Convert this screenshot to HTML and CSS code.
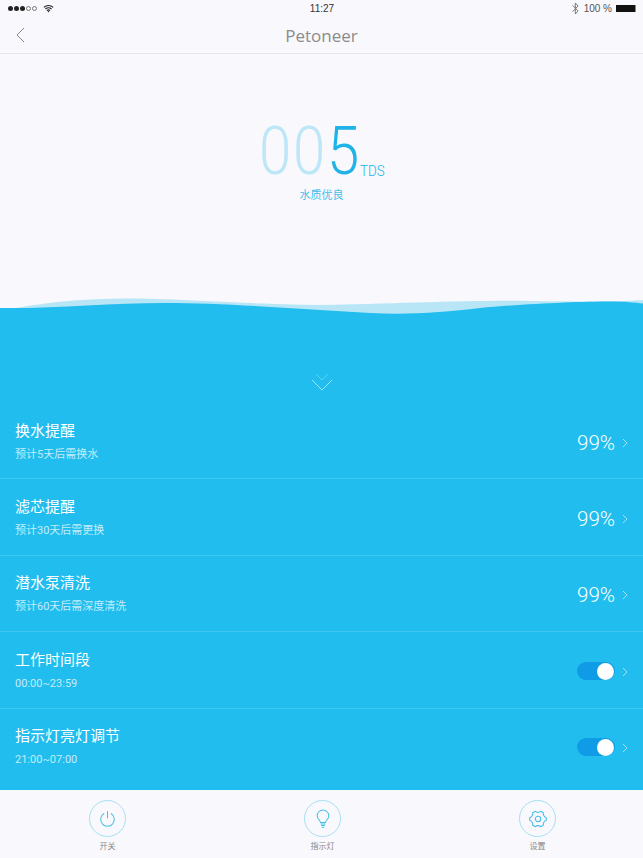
FILE: index.html
```html
<!DOCTYPE html>
<html lang="zh-CN">
<head>
    <meta charset="UTF-8">
    <meta name="viewport" content="width=device-width, initial-scale=1.0">
    <title>Petoneer</title>
    <link rel="stylesheet" href="styles.css">
</head>
<body>
    <div class="status-bar">
        <div class="status-left">
            <span class="signal">
                <i class="dot"></i><i class="dot"></i><i class="dot"></i><i class="dot off"></i><i class="dot off"></i>
            </span>
            <svg class="wifi" width="11" height="9" viewBox="0 0 13 10">
                <path d="M1 3.600a8 8 0 0 1 11 0M2.900 5.600a5.200 5.200 0 0 1 7.200 0M4.700 7.400a2.600 2.600 0 0 1 3.600 0" fill="none" stroke="#222" stroke-width="1.300"/>
                <path d="M5.400 8.500a1.500 1.500 0 0 1 2.200 0L6.500 9.800z" fill="#222"/>
            </svg>
        </div>
        <div class="status-time">11:27</div>
        <div class="status-right">
            <svg class="bluetooth" width="7" height="13" viewBox="0 0 7 13">
                <path d="M.7 3.400l5.400 5.600-2.800 3V1l2.800 3L.7 9.600" fill="none" stroke="#777" stroke-width="1"/>
            </svg>
            <span class="battery-text">100 %</span>
            <span class="battery"></span>
        </div>
    </div>

    <header class="nav">
        <svg class="back" width="9" height="16" viewBox="0 0 9 16">
            <path d="M8 1L1 8l7 7" fill="none" stroke="#8a8a8a" stroke-width="1"/>
        </svg>
        <h1>Petoneer</h1>
    </header>

    <section class="hero">
        <div class="reading">
            <span class="digit dim">0</span>
            <span class="digit dim">0</span>
            <span class="digit">5</span>
            <span class="unit">TDS</span>
        </div>
        <p class="quality">水质优良</p>
    </section>

    <svg class="wave" width="643" height="24" viewBox="0 0 643 24">
        <path d="M16 10C50 4 85 .5 125 .5C185 .5 240 6 320 7C390 6 470 2 530 3C570 3.500 610 4 643 2V24H16z" fill="#b9e6f7"/>
        <path d="M0 10C50 11 110 5 165 5C225 5 300 11 370 15C410 17 445 14 480 10C520 6 580 3.500 610 3.500C625 3.500 635 4.500 643 5.500V24H0z" fill="#20bdee"/>
    </svg>

    <main class="water">
        <div class="more">
            <svg width="22" height="18" viewBox="0 0 22 18">
                <path d="M5 1l6 6 6-6" fill="none" stroke="#62d0f3" stroke-width="1"/>
                <path d="M1 7l10 10L21 7" fill="none" stroke="#9ee3f8" stroke-width="1"/>
            </svg>
        </div>

        <div class="row">
            <div class="row-text">
                <div class="row-title">换水提醒</div>
                <div class="row-sub">预计5天后需换水</div>
            </div>
            <div class="row-value">99%</div>
            <svg class="chevron" width="6" height="10" viewBox="0 0 6 10"><path d="M1 1l4 4-4 4" fill="none" stroke="#a5e4f8" stroke-width="1"/></svg>
        </div>
        <div class="row">
            <div class="row-text">
                <div class="row-title">滤芯提醒</div>
                <div class="row-sub">预计30天后需更换</div>
            </div>
            <div class="row-value">99%</div>
            <svg class="chevron" width="6" height="10" viewBox="0 0 6 10"><path d="M1 1l4 4-4 4" fill="none" stroke="#a5e4f8" stroke-width="1"/></svg>
        </div>
        <div class="row">
            <div class="row-text">
                <div class="row-title">潜水泵清洗</div>
                <div class="row-sub">预计60天后需深度清洗</div>
            </div>
            <div class="row-value">99%</div>
            <svg class="chevron" width="6" height="10" viewBox="0 0 6 10"><path d="M1 1l4 4-4 4" fill="none" stroke="#a5e4f8" stroke-width="1"/></svg>
        </div>
        <div class="row">
            <div class="row-text">
                <div class="row-title">工作时间段</div>
                <div class="row-sub">00:00~23:59</div>
            </div>
            <div class="toggle"><span class="knob"></span></div>
            <svg class="chevron" width="6" height="10" viewBox="0 0 6 10"><path d="M1 1l4 4-4 4" fill="none" stroke="#a5e4f8" stroke-width="1"/></svg>
        </div>
        <div class="row last">
            <div class="row-text">
                <div class="row-title">指示灯亮灯调节</div>
                <div class="row-sub">21:00~07:00</div>
            </div>
            <div class="toggle"><span class="knob"></span></div>
            <svg class="chevron" width="6" height="10" viewBox="0 0 6 10"><path d="M1 1l4 4-4 4" fill="none" stroke="#a5e4f8" stroke-width="1"/></svg>
        </div>
    </main>

    <footer class="tabs">
        <div class="tab">
            <div class="tab-icon">
                <svg width="17" height="18" viewBox="0 0 20 20">
                    <path d="M6 3.600a8 8 0 1 0 8 0M10 1v8" fill="none" stroke="#45bfe8" stroke-width="1.200"/>
                </svg>
            </div>
            <span class="tab-label">开关</span>
        </div>
        <div class="tab">
            <div class="tab-icon">
                <svg width="14" height="20" viewBox="0 0 18 24">
                    <path d="M5.800 16.500C5.500 13.500 1.500 12 1.500 8a7.500 7.500 0 0 1 15 0c0 4-4 5.500-4.300 8.500z" fill="none" stroke="#45bfe8" stroke-width="1.300"/>
                    <path d="M6 18.500h6M6.500 20.500h5M7.500 22.500h3" fill="none" stroke="#45bfe8" stroke-width="1.300"/>
                </svg>
            </div>
            <span class="tab-label">指示灯</span>
        </div>
        <div class="tab">
            <div class="tab-icon">
                <svg width="18" height="18" viewBox="0 0 20 20">
                    <path d="M7.300 1.500c.6 1.500 4.800 1.500 5.400 0 1.300.4 2.500 1.100 3.400 2-.9 1.400 1.200 4.900 2.900 4.800.3 1.200.3 2.300 0 3.400-1.700-.1-3.800 3.400-2.900 4.800-.9.9-2.100 1.600-3.400 2-.6-1.500-4.800-1.500-5.400 0-1.300-.4-2.500-1.100-3.400-2 .9-1.400-1.200-4.900-2.900-4.800-.3-1.100-.3-2.200 0-3.400 1.700.1 3.800-3.400 2.900-4.800.9-.9 2.100-1.600 3.400-2z" fill="none" stroke="#45bfe8" stroke-width="1.200" stroke-linejoin="round"/>
                    <circle cx="10" cy="10" r="3" fill="none" stroke="#45bfe8" stroke-width="1.200"/>
                </svg>
            </div>
            <span class="tab-label">设置</span>
        </div>
    </footer>
</body>
</html>
```

FILE: styles.css
```css
* {
    margin: 0;
    padding: 0;
    box-sizing: border-box;
}

body {
    width: 643px;
    height: 858px;
    overflow: hidden;
    background: #f9f8fd;
    font-family: Roboto, "Noto Sans CJK SC", sans-serif;
}

.status-bar {
    height: 17px;
    padding: 0 7px 0 8px;
    display: grid;
    grid-template-columns: 1fr auto 1fr;
    align-items: center;
    font-family: "Liberation Sans", sans-serif;
    font-size: 10px;
    color: #333;
}

.status-left {
    display: flex;
    align-items: center;
    gap: 6px;
}

.signal {
    display: flex;
    gap: 1px;
}

.dot {
    width: 5px;
    height: 5px;
    border-radius: 50%;
    background: #222;
}

.dot.off {
    background: none;
    border: 1px solid #777;
}

.status-right {
    display: flex;
    align-items: center;
    justify-content: flex-end;
    gap: 5px;
}

.battery-text {
    color: #555;
}

.battery {
    width: 20px;
    height: 7px;
    background: #111;
    margin-left: -1px;
    border-right: 1px solid #888;
}

.nav {
    height: 37px;
    position: relative;
    display: flex;
    align-items: center;
    justify-content: center;
    border-bottom: 1px solid #e6e6ea;
}

.nav h1 {
    font-family: "Open Sans", sans-serif;
    font-size: 17px;
    font-weight: 400;
    color: #8b8b8b;
}

.back {
    position: absolute;
    left: 16px;
    top: 10px;
}

.hero {
    height: 244px;
    padding-top: 68px;
}

.reading {
    display: flex;
    justify-content: center;
    align-items: flex-end;
    height: 60px;
    padding-right: 2px;
    color: #20b3e8;
}

.digit {
    width: 34px;
    display: flex;
    justify-content: center;
    font-size: 66px;
    font-weight: 300;
    line-height: 60px;
    transform: scaleX(.88);
}

.digit.dim {
    color: #bde6f7;
}

.unit {
    width: 24px;
    font-size: 15.5px;
    line-height: 20px;
    font-weight: 300;
    margin-bottom: 1px;
    white-space: nowrap;
    transform: scaleX(.86);
    transform-origin: left;
}

.quality {
    text-align: center;
    margin-top: 6px;
    font-size: 11px;
    line-height: 16px;
    color: #45bdea;
}

.wave {
    display: block;
}

.water {
    height: 468px;
    background: #20bdee;
    color: #fff;
}

.more {
    height: 81px;
    display: flex;
    justify-content: center;
    padding-top: 51px;
}

.more svg {
    display: block;
}

.row {
    height: 76.4px;
    padding: 16.5px 15px 0 15px;
    display: flex;
    align-items: flex-start;
    border-bottom: 1px solid #3cc6f1;
}

.row.last {
    height: 80.4px;
    border-bottom: none;
}

.row-text {
    flex: 1;
}

.row-title {
    font-size: 15px;
    line-height: 22px;
}

.row-sub {
    margin-top: 6px;
    font-size: 11px;
    line-height: 14px;
    color: #c4ecfa;
}

.row-value {
    margin-top: 10px;
    font-size: 20.5px;
    line-height: 26px;
    font-weight: 300;
}

.toggle {
    width: 38px;
    height: 18px;
    margin-top: 13px;
    padding: 1px 1px 0 0;
    display: flex;
    justify-content: flex-end;
    border-radius: 9px;
    background: #0f9be6;
}

.knob {
    width: 17px;
    height: 17px;
    border-radius: 50%;
    background: #fff;
}

.chevron {
    margin: 18px 0 0 7px;
}

.tabs {
    height: 68px;
    width: 645px;
    display: grid;
    grid-template-columns: repeat(3, 1fr);
    padding-top: 10px;
    background: #f9f8fd;
}

.tab {
    display: flex;
    flex-direction: column;
    align-items: center;
}

.tab-icon {
    width: 37px;
    height: 37px;
    display: flex;
    align-items: center;
    justify-content: center;
    border: 1px solid #a5e0f3;
    border-radius: 50%;
}

.tab-label {
    margin-top: 4px;
    font-size: 8px;
    line-height: 12px;
    color: #888;
}
```
